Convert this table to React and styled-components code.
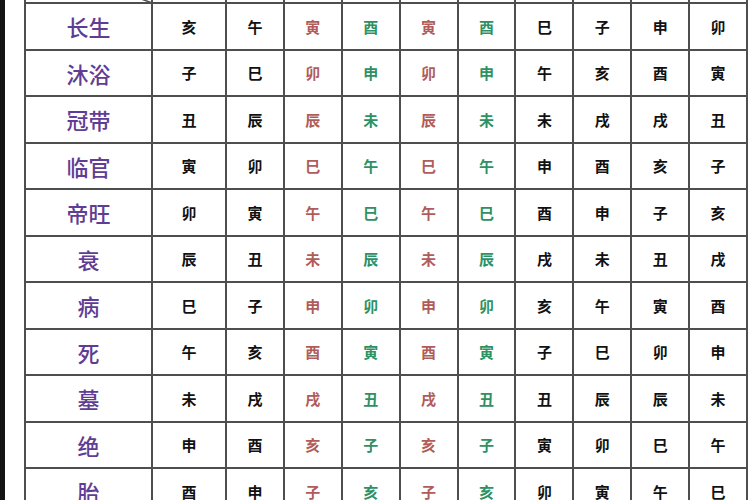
import React from 'react';
import styled, { createGlobalStyle } from 'styled-components';

const GlobalStyle = createGlobalStyle`
  html, body {
    margin: 0;
    padding: 0;
    background: #fff;
    overflow: hidden;
  }
  body {
    font-family: "Noto Sans CJK SC", "Noto Sans", sans-serif;
  }
`;

const Page = styled.div`
  display: flex;
  width: 750px;
  height: 500px;
  overflow: hidden;
  background: #fff;
`;

// dark strip along the left edge of the scan
const EdgeBar = styled.div`
  width: 5px;
  flex: none;
  background: #141414;
`;

const Table = styled.div`
  display: grid;
  grid-template-columns: 125px 72px repeat(9, 1fr);
  grid-auto-rows: 44.5px;
  gap: 2px;
  padding: 2px;
  width: 720px;
  margin: -44.5px 0 0 19px;
  background: #4e4e4e;
  flex: none;
  align-self: flex-start;
`;

const Cell = styled.div`
  position: relative;
  display: flex;
  align-items: center;
  justify-content: center;
  background: #fff;
  color: ${p => p.$color || '#111'};
  font-size: 15px;
  font-weight: 700;
  line-height: 1;
`;

const Label = styled(Cell)`
  color: #5f3d94;
  font-size: 22px;
  font-weight: 500;
`;

// header row sits above the top of the picture; only its slash shows
const Corner = styled(Cell)`
  & svg {
    position: absolute;
    inset: 0;
    width: 100%;
    height: 100%;
  }
`;

const colColors = [
  '#111', '#111', '#b05c5a', '#2e9163', '#b05c5a', '#2e9163',
  '#111', '#111', '#111', '#111'
];

const rows = [
  ['长生', '亥午寅酉寅酉巳子申卯'],
  ['沐浴', '子巳卯申卯申午亥酉寅'],
  ['冠带', '丑辰辰未辰未未戌戌丑'],
  ['临官', '寅卯巳午巳午申酉亥子'],
  ['帝旺', '卯寅午巳午巳酉申子亥'],
  ['衰', '辰丑未辰未辰戌未丑戌'],
  ['病', '巳子申卯申卯亥午寅酉'],
  ['死', '午亥酉寅酉寅子巳卯申'],
  ['墓', '未戌戌丑戌丑丑辰辰未'],
  ['绝', '申酉亥子亥子寅卯巳午'],
  ['胎', '酉申子亥子亥卯寅午巳'],
];

export default function App() {
  return (
    <Page>
      <GlobalStyle />
      <EdgeBar />
      <Table>
        <Corner>
          <svg viewBox="0 0 100 100" preserveAspectRatio="none">
            <line x1="0" y1="0" x2="100" y2="100" stroke="#4e4e4e" strokeWidth="1.5" vectorEffect="non-scaling-stroke" />
          </svg>
        </Corner>
        {colColors.map((c, i) => (
          <Cell key={i} />
        ))}
        {rows.map(([name, branches]) => (
          <React.Fragment key={name}>
            <Label>{name}</Label>
            {branches.split('').map((b, i) => (
              <Cell key={i} $color={colColors[i]}>{b}</Cell>
            ))}
          </React.Fragment>
        ))}
      </Table>
    </Page>
  );
}
